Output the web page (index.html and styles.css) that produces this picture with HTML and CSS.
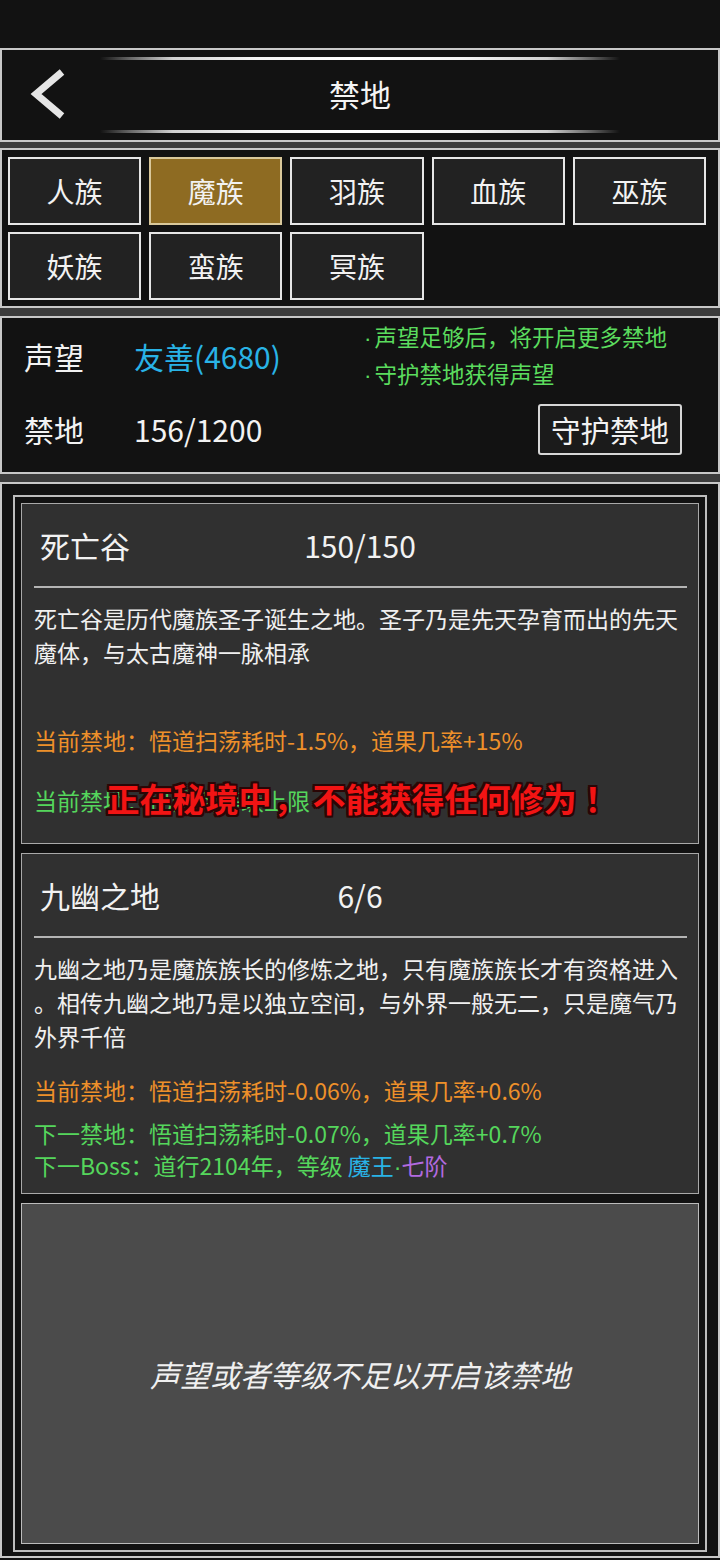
FILE: index.html
```html
<!DOCTYPE html>
<html lang="zh-CN">
<head>
<meta charset="utf-8">
<title>禁地</title>
<link rel="stylesheet" href="styles.css">
</head>
<body>
<div class="statusbar"></div>
<div class="screen">
  <header class="panel header">
    <div class="shine"></div>
    <div class="header-row">
      <div class="back">
        <svg width="40" height="52" viewBox="0 0 40 52"><polyline points="34,3 8,25 34,47" fill="none" stroke="#e6e6e6" stroke-width="7"/></svg>
      </div>
      <h1 class="title">禁地</h1>
      <div></div>
    </div>
    <div class="shine"></div>
  </header>

  <nav class="panel tabs">
    <div class="tab">人族</div>
    <div class="tab active">魔族</div>
    <div class="tab">羽族</div>
    <div class="tab">血族</div>
    <div class="tab">巫族</div>
    <div class="tab">妖族</div>
    <div class="tab">蛮族</div>
    <div class="tab">冥族</div>
  </nav>

  <section class="panel info">
    <div class="info-row row-top">
      <div class="label">声望</div>
      <div class="value blue">友善(4680)</div>
      <div class="notes">
        <div><span class="dot note-dot">·</span>声望足够后，将开启更多禁地</div>
        <div><span class="dot note-dot">·</span>守护禁地获得声望</div>
      </div>
    </div>
    <div class="info-row row-bottom">
      <div class="label">禁地</div>
      <div class="value">156/1200</div>
      <button class="guard">守护禁地</button>
    </div>
  </section>

  <section class="panel list">
    <div class="frame">
      <article class="card">
        <div class="card-head">
          <div class="card-name">死亡谷</div>
          <div class="card-count">150/150</div>
          <div></div>
        </div>
        <div class="divider"></div>
        <p class="desc">死亡谷是历代魔族圣子诞生之地。圣子乃是先天孕育而出的先天<br>魔体，与太古魔神一脉相承</p>
        <p class="line orange">当前禁地：悟道扫荡耗时-1.5%，道果几率+15%</p>
        <p class="line green single">当前禁地：已达到等级上限</p>
      </article>

      <article class="card">
        <div class="card-head">
          <div class="card-name">九幽之地</div>
          <div class="card-count">6/6</div>
          <div></div>
        </div>
        <div class="divider"></div>
        <p class="desc">九幽之地乃是魔族族长的修炼之地，只有魔族族长才有资格进入<br>。相传九幽之地乃是以独立空间，与外界一般无二，只是魔气乃<br>外界千倍</p>
        <p class="line orange">当前禁地：悟道扫荡耗时-0.06%，道果几率+0.6%</p>
        <div class="greens">
          <p class="line green">下一禁地：悟道扫荡耗时-0.07%，道果几率+0.7%</p>
          <p class="line green">下一Boss：道行2104年，等级 <span class="blue">魔王</span><span class="dot">·</span><span class="purple">七阶</span></p>
        </div>
      </article>

      <article class="card locked">
        <p class="locked-text">声望或者等级不足以开启该禁地</p>
      </article>
    </div>
  </section>
</div>
<div class="toast">正在秘境中<span class="punct comma">，</span>不能获得任何修为<span class="punct bang">！</span></div>
</body>
</html>
```
FILE: styles.css
```css
* { box-sizing: border-box; }
html, body {
  margin: 0;
  padding: 0;
  background: #121212;
  color: #f2f2f2;
  font-family: "Noto Sans CJK SC", "Noto Sans", sans-serif;
}
body { width: 720px; height: 1560px; position: relative; overflow: hidden; }

.statusbar { height: 48px; background: #121212; }

.screen {
  background: #3c3c3c;
  display: flex;
  flex-direction: column;
}

.panel {
  background: #121212;
  border: 2px solid #c8c8c8;
}

/* header */
.header {
  height: 94px;
  padding: 7px 0;
  display: flex;
  flex-direction: column;
}
.shine {
  height: 3px;
  width: 520px;
  margin: 0 auto;
  background: linear-gradient(to right, rgba(255,255,255,0), #6a6a6a 6%, #d0d0d0 14%, #f4f4f4 30%, #ffffff 50%, #f4f4f4 70%, #d0d0d0 86%, #6a6a6a 94%, rgba(255,255,255,0));
}
.header-row {
  height: 70px;
  display: grid;
  grid-template-columns: 1fr auto 1fr;
  align-items: center;
}
.back { padding-left: 26px; display: flex; align-items: center; }
.back svg { display: block; }
.title {
  margin: 0;
  font-size: 31px;
  font-weight: 400;
  color: #f4f4f4;
  line-height: 40px;
  position: relative;
  top: -1px;
}

/* tabs */
.tabs {
  margin-top: 6px;
  height: 160px;
  padding: 7px 12px 6px 6px;
  display: grid;
  grid-template-columns: repeat(5, 1fr);
  grid-template-rows: 68px 68px;
  column-gap: 8px;
  row-gap: 7px;
}
.tab {
  border: 2px solid #e6e6e6;
  background: #222222;
  display: flex;
  align-items: center;
  justify-content: center;
  font-size: 28px;
  color: #f2f2f2;
}
.tab.active {
  background: #8e6b22;
  border-color: #d9c89b;
}

/* info */
.info {
  margin-top: 8px;
  height: 158px;
  padding: 4px 36px 17px 22px;
  display: flex;
  flex-direction: column;
  gap: 13px;
}
.info-row { display: flex; align-items: center; }
.row-top { height: 68px; }
.row-bottom { height: 52px; }
.label { width: 110px; font-size: 30px; color: #f2f2f2; }
.value { width: 230px; font-size: 30px; color: #f2f2f2; }
.blue { color: #29b3e6; }
.purple { color: #b36ae0; }
.dot { font-family: "Liberation Sans", "Noto Sans", sans-serif; }
.note-dot { margin-right: 3px; }
.notes {
  font-size: 22.5px;
  line-height: 34px;
  color: #5bdc5e;
}
.guard {
  margin-left: auto;
  width: 144px;
  height: 51px;
  border: 2px solid #d6d6d6;
  border-radius: 3px;
  background: #1b1b1b;
  color: #f2f2f2;
  font-family: inherit;
  font-size: 29.5px;
  padding: 0;
}

/* list */
.list {
  margin-top: 8px;
  padding: 11px 11px 4px 11px;
}
.frame {
  border: 2px solid #bdbdbd;
  padding: 6px;
  display: flex;
  flex-direction: column;
  gap: 9px;
}
.card {
  height: 341px;
  border: 1px solid #a9a9a9;
  background: #303030;
  display: flex;
  flex-direction: column;
}
.card-head {
  padding-top: 19px;
  display: grid;
  grid-template-columns: 1fr auto 1fr;
  align-items: center;
  height: 63px;
}
.card-name { padding-left: 18px; font-size: 30px; line-height: 44px; color: #f2f2f2; }
.card-count { font-size: 30px; line-height: 44px; color: #f2f2f2; }
.divider {
  margin: 19px 11px 0 12px;
  height: 2px;
  background: #b4b4b4;
}
.desc {
  margin: 13px 0 0;
  padding: 0 11px 0 12px;
  min-height: 102px;
  font-size: 23px;
  line-height: 34px;
  color: #f0f0f0;
  white-space: nowrap;
}
.line {
  margin: 0;
  padding: 0 12px;
  font-size: 23px;
  white-space: nowrap;
}
.orange { margin-top: 20px; line-height: 34px; color: #ee902a; }
.green { line-height: 32px; color: #55d65c; }
.green.single { margin-top: 27px; }
.greens { margin-top: 10px; }

.locked {
  background: #4b4b4b;
  border-color: #bcbcbc;
  align-items: center;
  justify-content: center;
}
.locked-text {
  margin: 0;
  font-size: 30px;
  font-style: italic;
  color: #f0f0f0;
}

/* toast overlay */
.toast {
  position: absolute;
  top: 778px;
  left: 0;
  right: -4px;
  text-align: center;
  font-size: 33px;
  line-height: 40px;
  font-weight: 700;
  white-space: nowrap;
  color: #f21414;
  text-shadow:
    -2px -2px 0 #2a0606, 2px -2px 0 #2a0606, -2px 2px 0 #2a0606, 2px 2px 0 #2a0606,
    0 -2px 0 #2a0606, 0 2px 0 #2a0606, -2px 0 0 #2a0606, 2px 0 0 #2a0606;
}
.punct { display: inline-block; width: 1em; }
.comma { text-align: left; padding-left: 2px; margin-right: 8px; }
.bang { text-align: center; margin-left: 8px; }
```
